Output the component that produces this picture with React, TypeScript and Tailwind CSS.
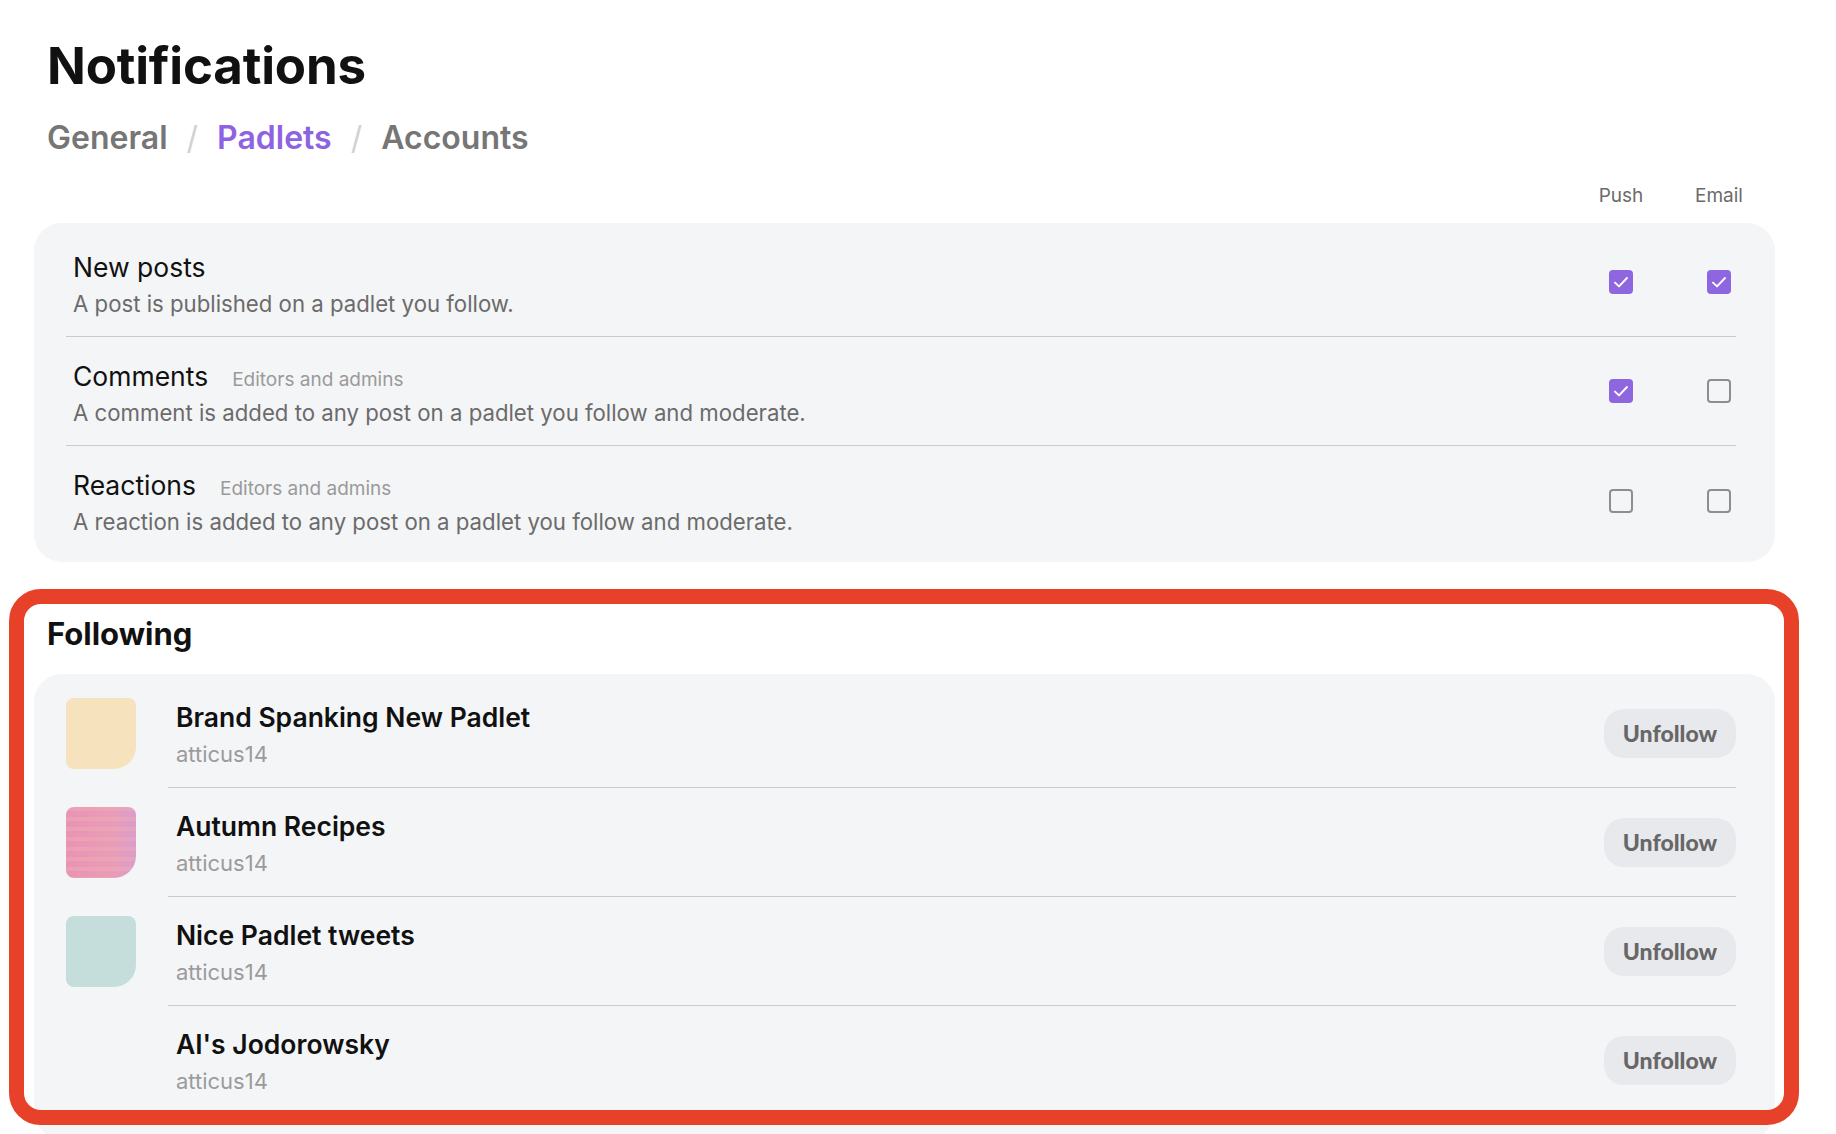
import React from 'react';

type Setting = { title: string; note?: string; desc: string; push: boolean; email: boolean };
type Followed = { id: string; name: string; owner: string; thumb: string };

const settings: Setting[] = [
  { title: 'New posts', desc: 'A post is published on a padlet you follow.', push: true, email: true },
  { title: 'Comments', note: 'Editors and admins', desc: 'A comment is added to any post on a padlet you follow and moderate.', push: true, email: false },
  { title: 'Reactions', note: 'Editors and admins', desc: 'A reaction is added to any post on a padlet you follow and moderate.', push: false, email: false },
];

const following: Followed[] = [
  { id: 'a', name: 'Brand Spanking New Padlet', owner: 'atticus14', thumb: 'bg-[#f6e2bd]' },
  {
    id: 'b',
    name: 'Autumn Recipes',
    owner: 'atticus14',
    thumb:
      'bg-[repeating-linear-gradient(180deg,rgba(240,180,180,0.35)_0px,rgba(240,180,180,0.35)_4px,transparent_4px,transparent_10px),linear-gradient(90deg,#ea93b4,#e99cb6_65%,#db9ccb)]',
  },
  { id: 'c', name: 'Nice Padlet tweets', owner: 'atticus14', thumb: 'bg-[#c5dedb]' },
  { id: 'd', name: "AI's Jodorowsky", owner: 'atticus14', thumb: 'bg-[#f4f5f7]' },
];

function Checkbox({ checked }: { checked: boolean }) {
  if (checked) {
    return (
      <div className="w-[24px] h-[24px] rounded-[4px] bg-[#8e66e0] flex items-center justify-center">
        <svg width="24" height="24" viewBox="0 0 24 24" fill="none">
          <path d="M6 12.6l4 3.8 8-8.4" stroke="white" strokeWidth="1.9" strokeLinecap="round" strokeLinejoin="round" />
        </svg>
      </div>
    );
  }
  return <div className="w-[24px] h-[24px] rounded-[4px] border-2 border-[#8e8e8e]" />;
}

export default function App() {
  return (
    <div className="relative min-h-screen bg-white font-['Inter',sans-serif] pl-[34px] pr-[61px] pt-[35px] pb-10">
      <h1 className="pl-[13px] text-[51px] leading-[62px] font-bold text-[#111] tracking-[-0.2px]">Notifications</h1>

      {/* Tabs */}
      <nav className="pl-[13px] mt-[22px] flex items-center text-[32px] leading-[38px] font-semibold">
        <span className="text-[#767676]">General</span>
        <span className="mx-[19px] font-normal text-[#d2d2d2]">/</span>
        <span className="text-[#8e63e2]">Padlets</span>
        <span className="mx-[19px] font-normal text-[#d2d2d2]">/</span>
        <span className="text-[#767676]">Accounts</span>
      </nav>

      {/* Column labels */}
      <div className="mt-[28px] flex justify-end gap-[64px] pr-[39px] text-[19px] leading-[22px] text-[#6b6b6b]">
        <div className="w-[34px] flex justify-center whitespace-nowrap">Push</div>
        <div className="w-[34px] flex justify-center whitespace-nowrap">Email</div>
      </div>

      <div className="mt-[16px] rounded-[28px] bg-[#f4f5f7] pl-8 pr-[39px] pt-[5px] pb-[7px]">
        {settings.map((s, i) => (
          <div
            key={s.title}
            className={`flex items-center h-[109px] ${i < settings.length - 1 ? 'border-b border-[#cbcbcb]' : ''}`}
          >
            <div className="flex-1 pl-[7px] pt-[5px] flex flex-col">
              <div className="flex items-baseline">
                <span className="text-[26.5px] leading-[30px] text-[#111]">{s.title}</span>
                {s.note && <span className="ml-[24px] text-[19px] leading-[22px] text-[#9a9a9a]">{s.note}</span>}
              </div>
              <p className="mt-[8px] text-[22.2px] leading-[28px] text-[#6b6b6b]">{s.desc}</p>
            </div>
            <div className="flex gap-[64px]">
              <div className="w-[34px] flex justify-center">
                <Checkbox checked={s.push} />
              </div>
              <div className="w-[34px] flex justify-center">
                <Checkbox checked={s.email} />
              </div>
            </div>
          </div>
        ))}
      </div>

      <h2 className="mt-[53px] pl-[13px] text-[31px] leading-[38px] font-bold text-[#111]">Following</h2>

      <div className="mt-[21px] rounded-[28px] bg-[#f4f5f7] pl-8 pr-[39px] pt-[5px] pb-[24px]">
        {following.map((f, i) => (
          <div key={f.id} className="flex items-center h-[109px]">
            <div className={`w-[70px] h-[71px] shrink-0 rounded-[8px] rounded-br-[22px] ${f.thumb}`} />
            <div
              className={`ml-8 flex-1 h-full flex items-center ${i < following.length - 1 ? 'border-b border-[#cbcbcb]' : ''}`}
            >
              <div className="flex-1 pl-2 pt-[3px] flex flex-col">
                <span className="text-[26.5px] leading-[30px] font-semibold text-[#111]">{f.name}</span>
                <span className="mt-[8px] text-[22px] leading-[28px] text-[#9b9b9b]">{f.owner}</span>
              </div>
              <button className="w-[132px] h-[49px] rounded-[20px] bg-[#e8e9ec] font-['Lato',sans-serif] font-black text-[23px] text-[#676767]">
                Unfollow
              </button>
            </div>
          </div>
        ))}
      </div>

      {/* annotation frame drawn over the Following section */}
      <div className="pointer-events-none absolute left-[9px] top-[589px] w-[1790px] h-[536px] rounded-[32px] border-[15px] border-[#e8412a]" />
    </div>
  );
}
